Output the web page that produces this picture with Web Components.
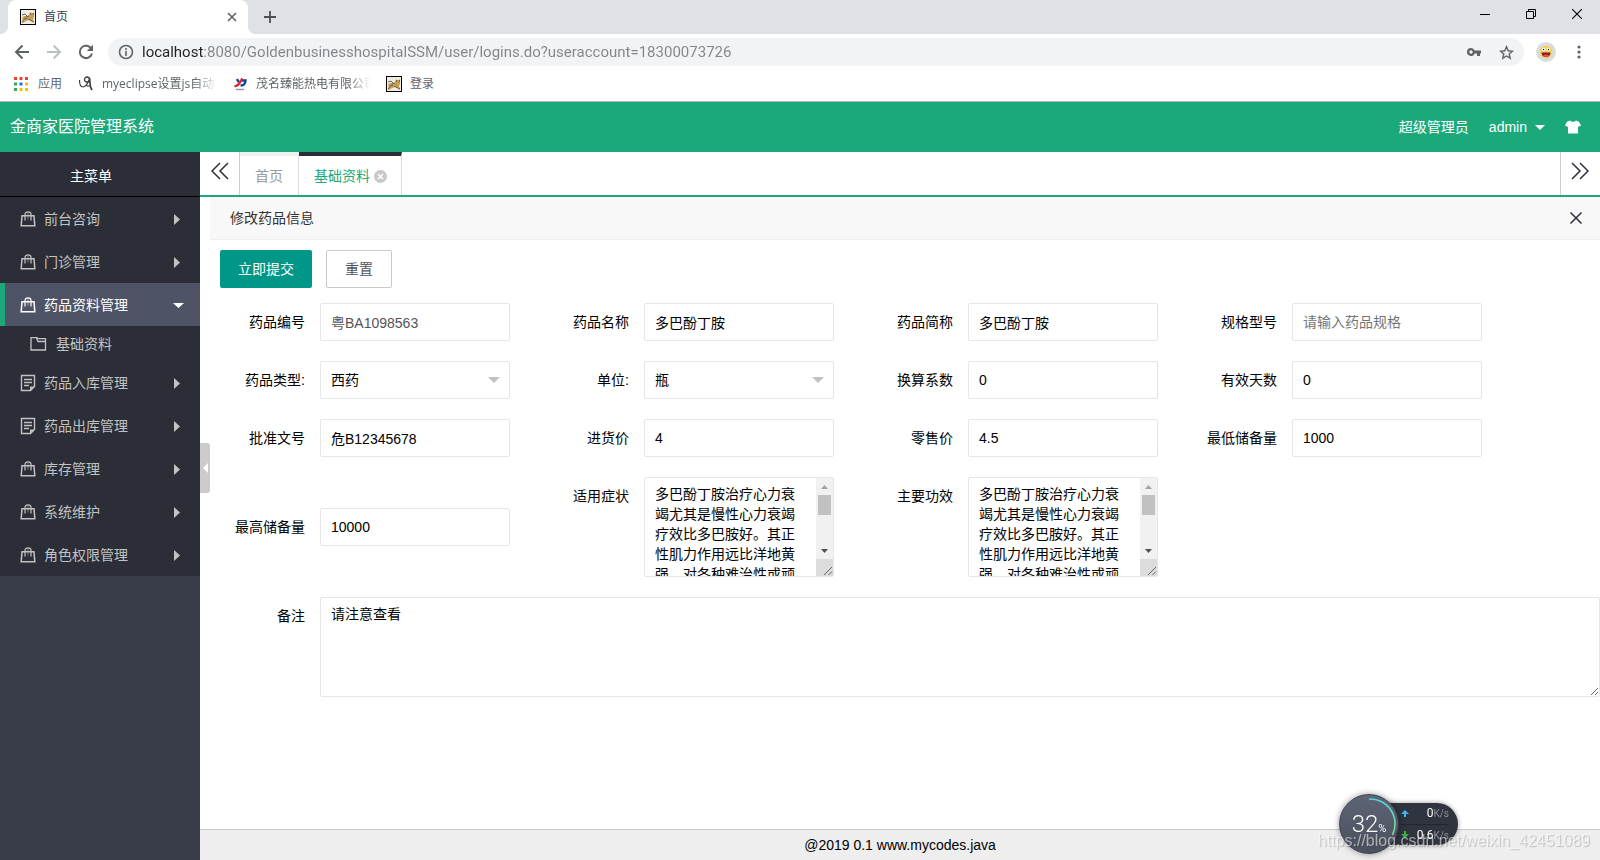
<!DOCTYPE html>
<html lang="zh-CN">
<head>
<meta charset="utf-8">
<title>首页</title>
<style>
  html, body { margin: 0; height: 100%; }
  body { font: 14px/20px "Liberation Sans", "Noto Sans CJK SC", sans-serif; color: #000; background: #fff; overflow: hidden; }
</style>
</head>
<body>
<desktop-shell>
  <tab-strip slot="browser"></tab-strip>
  <address-bar slot="browser"></address-bar>
  <bookmark-bar slot="browser"></bookmark-bar>
  <app-header slot="header"></app-header>
  <side-menu slot="side">
    <menu-item icon="bag">前台咨询</menu-item>
    <menu-item icon="bag">门诊管理</menu-item>
    <menu-item icon="bag" open>药品资料管理</menu-item>
    <menu-item icon="folder" sub>基础资料</menu-item>
    <menu-item icon="note">药品入库管理</menu-item>
    <menu-item icon="note">药品出库管理</menu-item>
    <menu-item icon="bag">库存管理</menu-item>
    <menu-item icon="bag">系统维护</menu-item>
    <menu-item icon="bag">角色权限管理</menu-item>
  </side-menu>
  <page-tabs slot="tabs"></page-tabs>
  <medicine-form slot="content"></medicine-form>
  <page-footer slot="footer">@2019 0.1 www.mycodes.java</page-footer>
</desktop-shell>
<speed-widget></speed-widget>
<water-mark>https://blog.csdn.net/weixin_42451089</water-mark>

<script>
const base = `
  :host, * { box-sizing: border-box; }
  svg { display: block; flex: none; }
  button { font: inherit; color: inherit; background: none; border: 0; padding: 0; margin: 0; }
  a { color: inherit; text-decoration: none; }
`;
function define(name, render) {
  customElements.define(name, class extends HTMLElement {
    constructor() {
      super();
      this.attachShadow({ mode: 'open' });
    }
    connectedCallback() {
      if (this.shadowRoot.firstChild) return;
      const t = document.createElement('template');
      const [css, html] = render(this);
      t.innerHTML = `<style>${base}${css}</style>${html}`;
      this.shadowRoot.append(t.content.cloneNode(true));
    }
  });
}

const icons = {
  cat: `<svg width="16" height="16" viewBox="0 0 16 16"><rect width="16" height="16" fill="#000"/><rect x="1" y="1" width="14" height="14" fill="#efece6"/><path d="M2 9l2-2 3 0 2-1 1-3 1 1h2l1-1v5l-1 2 1 4-3-2-2-1-3 1-3 2H2l1-3z" fill="#c99f4e"/><path d="M2 6l3-1 2 2M2 13l3-4 2 1M8 10l4 2 2 1M6 8l3-1" fill="none" stroke="#6b6354"/><path d="M10 5h1M13 5h1" stroke="#333"/></svg>`,
  bag: `<svg width="16" height="18" viewBox="0 0 16 18" fill="none" stroke="currentColor"><path d="M2 5.700h12l.8 10H1.200z" stroke-width="1.500"/><path d="M5 10.500V4.500c0-3.500 6-3.500 6 0v6" stroke-width="1.200"/><path d="M8 2.500v7" stroke-width=".8" opacity=".7"/></svg>`,
  note: `<svg width="16" height="18" viewBox="0 0 16 18" fill="none" stroke="currentColor"><path d="M1.500 1.500h13v11l-4 4h-9z" stroke-width="1.400"/><path d="M10 16.500v-4h4.500z" fill="currentColor" stroke="none"/><path d="M4 5.500h8M4 8.500h8M4 11.500h5" stroke-width="1.300"/></svg>`,
  folder: `<svg width="17" height="16" viewBox="0 0 17 16" fill="none" stroke="currentColor" stroke-width="1.300"><path d="M1 14V1.700h6l1 1h7.500V14z"/><path d="M6.500 2l1.500 3.500h7.500"/></svg>`,
};

define('desktop-shell', () => [`
  :host { display: flex; flex-direction: column; height: 100vh; }
  .body { display: flex; flex: 1; min-height: 0; }
  .side { width: 200px; flex: none; background: #393d49; }
  main { flex: 1; min-width: 0; display: flex; flex-direction: column; }
  .view { flex: 1; display: flex; min-height: 0; }
  .gutter { width: 10px; flex: none; padding-top: 246px; }
  .gutter button { display: grid; place-items: center; width: 10px; height: 50px; background: #ccc; border-radius: 0 3px 3px 0; }
  .panel { flex: 1; min-width: 0; }
`, `
  <slot name="browser"></slot>
  <slot name="header"></slot>
  <div class="body">
    <div class="side"><slot name="side"></slot></div>
    <main>
      <slot name="tabs"></slot>
      <div class="view">
        <div class="gutter"><button aria-label="收起菜单"><svg width="8" height="10" viewBox="0 0 8 10"><path d="M7 0v10L2 5z" fill="#fff"/></svg></button></div>
        <div class="panel"><slot name="content"></slot></div>
      </div>
      <slot name="footer"></slot>
    </main>
  </div>`]);

define('tab-strip', () => [`
  :host { display: flex; height: 34px; flex: none; background: #dee1e6; padding-left: 8px; font: 12px/16px "Open Sans", "Noto Sans CJK SC", sans-serif; color: #3c4043; }
  .tab { position: relative; display: flex; align-items: center; width: 240px; padding: 0 10px 0 12px; gap: 8px; background: #fff; border-radius: 8px 8px 0 0; }
  .tab::before, .tab::after { content: ""; position: absolute; bottom: 0; width: 8px; height: 8px; }
  .tab::before { left: -8px; background: radial-gradient(circle at 0 0, #dee1e6 8px, #fff 8px); }
  .tab::after { right: -8px; background: radial-gradient(circle at 100% 0, #dee1e6 8px, #fff 8px); }
  .name { flex: 1; }
  .new { width: 44px; display: grid; place-items: center; }
  .win { margin-left: auto; display: flex; height: 28px; }
  .win button { width: 46px; display: grid; place-items: center; }
`, `
  <div class="tab">${icons.cat}<span class="name">首页</span>
    <button aria-label="关闭标签"><svg width="12" height="12" viewBox="0 0 12 12"><path d="M2 2l8 8M10 2l-8 8" stroke="#5f6368" stroke-width="1.600"/></svg></button></div>
  <button class="new" aria-label="新标签"><svg width="14" height="14" viewBox="0 0 14 14"><path d="M7 1v12M1 7h12" stroke="#4d5156" stroke-width="1.800"/></svg></button>
  <div class="win">
    <button aria-label="最小化"><svg width="10" height="10"><path d="M0 5.500h10" stroke="#000"/></svg></button>
    <button aria-label="还原"><svg width="10" height="10" fill="none" stroke="#000"><path d="M.5 2.500h7v7h-7zM2.500 2.500v-2h7v7h-2"/></svg></button>
    <button aria-label="关闭"><svg width="10" height="10"><path d="M0 0l10 10M10 0L0 10" stroke="#000" stroke-width="1.100"/></svg></button>
  </div>`]);

define('address-bar', () => [`
  :host { display: flex; align-items: center; height: 36px; flex: none; background: #fff; padding: 0 6px 0 6px; color: #5f6368; }
  .nav { width: 32px; display: grid; place-items: center; }
  .box { flex: 1; display: flex; align-items: center; height: 28px; margin: 0 12px 0 6px; padding: 0 2px 0 10px; background: #f1f3f4; border-radius: 14px; }
  input { flex: 1; min-width: 0; height: 28px; border: 0; padding: 0; margin-left: 8px; outline: 0; font: 15px/28px Roboto, sans-serif; color: transparent;
    background: linear-gradient(90deg, #202124 62px, #80868b 62px); -webkit-background-clip: text; background-clip: text; }
  .box button { width: 32px; height: 28px; display: grid; place-items: center; }
  .more { width: 30px; display: grid; place-items: center; margin-left: 8px; }
`, `
  <button class="nav" aria-label="后退"><svg width="16" height="16" fill="none" stroke="#5f6368" stroke-width="2"><path d="M15 8H2M8.500 1.500L2 8l6.500 6.500"/></svg></button>
  <button class="nav" aria-label="前进"><svg width="16" height="16" fill="none" stroke="#bdc1c6" stroke-width="2"><path d="M1 8h13M7.500 1.500L14 8l-6.500 6.500"/></svg></button>
  <button class="nav" aria-label="刷新"><svg width="16" height="16" fill="none" stroke="#5f6368" stroke-width="2"><path d="M13.500 5A6.200 6.200 0 1 0 14 9.500"/><path d="M15 .8V7H8.800z" fill="#5f6368" stroke="none"/></svg></button>
  <div class="box">
    <svg width="16" height="16" fill="none" stroke="#5f6368" stroke-width="1.600"><circle cx="8" cy="8" r="6.500"/><path d="M8 7v5M8 4v2"/></svg>
    <input aria-label="地址" value="localhost:8080/GoldenbusinesshospitalSSM/user/logins.do?useraccount=18300073726">
    <button aria-label="密码"><svg width="14" height="8" viewBox="0 0 14 8"><path fill-rule="evenodd" fill="#5f6368" d="M4 0a4 4 0 0 1 3.700 2.500H14v3h-1V8h-3V5.500H7.700A4 4 0 1 1 4 0zm0 2.300a1.700 1.700 0 1 0 0 3.400 1.700 1.700 0 0 0 0-3.400z"/></svg></button>
    <button aria-label="收藏"><svg width="15" height="15" viewBox="0 0 15 15"><path d="M7.500 1.800l1.700 4 4.300.4-3.300 2.800 1 4.200-3.700-2.200-3.700 2.200 1-4.200L1.500 6.200l4.300-.4z" fill="none" stroke="#5f6368" stroke-width="1.400"/></svg></button>
  </div>
  <svg width="20" height="20"><circle cx="10" cy="10" r="10" fill="#dadce0"/><circle cx="10" cy="10" r="6.500" fill="#f6cf5a"/><circle cx="7.500" cy="7.500" r="1.700" fill="#fff"/><circle cx="12.500" cy="7.500" r="1.700" fill="#fff"/><circle cx="7.500" cy="7.500" r=".7"/><circle cx="12.500" cy="7.500" r=".7"/><path d="M5.500 10.500h9c0 6-9 6-9 0z" fill="#7d1d1d"/><path d="M7 13.500c2-1.300 4-1.300 6 0-1.500 1.900-4.500 1.900-6 0z" fill="#f0447c"/></svg>
  <button class="more" aria-label="菜单"><svg width="4" height="14" fill="#5f6368"><circle cx="2" cy="2" r="1.600"/><circle cx="2" cy="7" r="1.600"/><circle cx="2" cy="12" r="1.600"/></svg></button>`]);

define('bookmark-bar', () => [`
  :host { display: flex; align-items: center; height: 32px; flex: none; background: #fff; border-bottom: 1px solid #b6b4b6; padding: 0 14px 3px; font: 12px/18px "Open Sans", "Noto Sans CJK SC", sans-serif; color: #5f6368; }
  a { display: flex; align-items: center; gap: 8px; height: 20px; }
  .apps { width: 64px; gap: 10px; }
  .js { width: 154px; }
  .power { width: 154px; }
  .fade { width: 122px; overflow: hidden; white-space: nowrap; -webkit-mask-image: linear-gradient(90deg, #000 76%, transparent 94%); mask-image: linear-gradient(90deg, #000 76%, transparent 94%); }
`, `
  <a class="apps" href="#"><svg width="14" height="14"><path d="M0 0h3v3H0zM5.500 0h3v3h-3zM11 0h3v3h-3z" fill="#ea4335"/><path d="M0 5.500h3v3H0zM0 11h3v3H0z" fill="#34a853"/><path d="M5.500 5.500h3v3h-3z" fill="#1a73e8"/><path d="M11 5.500h3v3h-3zM5.500 11h3v3h-3zM11 11h3v3h-3z" fill="#fbbc04"/></svg>应用</a>
  <a class="js" href="#"><svg width="16" height="16" fill="none" stroke="#3f3f3f"><path d="M1.500 4c0 4 1 7 3.500 7 2.500-.5 5-4 6-7" stroke-width="1.200"/><circle cx="9" cy="3.500" r="2.500" stroke-width="1.300"/><path d="M11.500 2l1 9 1.500 3" stroke-width="1.700"/><path d="M8 9c1 1.500 3 1 4 .5" stroke-width="1.100"/></svg><span class="fade">myeclipse设置js自动</span></a>
  <a class="power" href="#"><svg width="16" height="16" viewBox="0 0 16 16" fill="none" stroke-width="2.400"><path d="M5 3l1.500 3" stroke="#17459c"/><path d="M8.500 9.500c4 0 4.500-1.500 5-5H10" stroke="#17459c"/><path d="M10.500 2.500L6 9l-3.500 1.500" stroke="#dd2633"/><path d="M4 13.500h8" stroke="#8e98ad" stroke-width="1.500"/></svg><span class="fade">茂名臻能热电有限公司</span></a>
  <a href="#">${icons.cat}登录</a>`]);

define('app-header', () => [`
  :host { display: flex; align-items: center; height: 50px; flex: none; background: #1ba97b; color: #fff; padding: 0 19px 0 10px; gap: 20px; }
  h1 { font-size: 16px; line-height: 20px; font-weight: 400; margin: 0 auto 0 0; }
  .user { display: flex; align-items: center; gap: 8px; }
`, `
  <h1>金商家医院管理系统</h1>
  <span>超级管理员</span>
  <a class="user" href="#">admin<svg width="10" height="5"><path d="M0 0h10L5 5z" fill="#fff"/></svg></a>
  <button aria-label="换肤"><svg width="16" height="14" viewBox="0 0 16 14"><path d="M5 .5c1.500 1.700 4.500 1.700 6 0l3 1.200L16 5.500 13 7v6.500H3V7L0 5.500l2-3.800z" fill="#fff"/></svg></button>`]);

define('side-menu', () => [`
  :host { display: block; background: #2b2e37; }
  h2 { margin: 0; height: 45px; padding-right: 18px; border-bottom: 1px solid #000; color: #fff; font-size: 14px; line-height: 48px; font-weight: 400; text-align: center; }
`, `<h2>主菜单</h2><nav><slot></slot></nav>`]);

define('menu-item', el => [`
  :host { display: block; color: #c2c2c2; }
  a { display: flex; align-items: center; height: 43px; padding: 0 15px 0 15px; border-left: 5px solid transparent; }
  :host([sub]) a { height: 35px; padding-left: 25px; }
  :host([open]) { color: #fff; }
  :host([open]) a { background: #4e5465; border-color: #1ba97b; }
  .ic { width: 24px; }
  :host([sub]) .ic { width: 26px; }
  .arrow { margin-left: auto; width: 12px; }
`, `<a href="#"><span class="ic">${icons[el.getAttribute('icon')]}</span><slot></slot>
  ${el.hasAttribute('sub') ? '' : `<svg class="arrow" height="12" fill="currentColor">${el.hasAttribute('open') ? '<path d="M0 4h11L5.500 9z"/>' : '<path d="M1 1v11l6-5.500z"/>'}</svg>`}</a>`]);

define('page-tabs', () => [`
  :host { display: flex; height: 45px; flex: none; border-bottom: 2px solid #1ba97b; background: #fff; color: #999; }
  .nav { width: 40px; display: grid; place-items: center; padding-bottom: 5px; color: #2b2e37; }
  .prev { border-right: 1px solid #ccc; }
  .next { margin-left: auto; border-left: 1px solid #ccc; padding-right: 1px; }
  a { display: flex; align-items: center; gap: 4px; padding: 1px 14px 0 15px; border-top: 4px solid #f0f0f0; border-right: 1px solid #ddd; }
  a:not(.on) { padding-right: 15px; }
  a.on { color: #1ba97b; border-top-color: #2b2e37; }
`, `
  <button class="nav prev" aria-label="向左"><svg width="18" height="18" fill="none" stroke="currentColor" stroke-width="1.500"><path d="M9 1L1 9l8 8M17 1L9 9l8 8"/></svg></button>
  <a href="#">首页</a>
  <a href="#" class="on">基础资料<svg width="13" height="13"><circle cx="6.500" cy="6.500" r="6.500" fill="#c8c8c8"/><path d="M4 4l5 5M9 4L4 9" stroke="#fff" stroke-width="1.600"/></svg></a>
  <button class="nav next" aria-label="向右"><svg width="18" height="18" fill="none" stroke="currentColor" stroke-width="1.500"><path d="M1 1l8 8-8 8M9 1l8 8-8 8"/></svg></button>`]);

const arrowImg = (d, c, w, h) => `url("data:image/svg+xml,%3Csvg xmlns='http://www.w3.org/2000/svg' width='${w}' height='${h}'%3E%3Cpath d='${d}' fill='${encodeURIComponent(c)}'/%3E%3C/svg%3E")`;

define('form-field', el => {
  const g = n => el.getAttribute(n) || '';
  const type = g('type');
  let control = `<input id="c" value="${g('value')}" placeholder="${g('placeholder')}" ${el.hasAttribute('disabled') ? 'disabled' : ''}>`;
  if (type === 'select') control = `<select id="c"><option>${g('value')}</option></select>`;
  if (type === 'area') control = `<textarea id="c">${g('value')}</textarea>`;
  if (el.hasAttribute('scroll')) control = `<div class="scroller">${control}<div class="bar" aria-hidden="true">
    <span class="cap"><svg width="7" height="4"><path d="M0 4h7L3.500 0z" fill="#a3a3a3"/></svg></span>
    <span class="track"><span class="thumb"></span></span>
    <span class="cap"><svg width="7" height="4"><path d="M0 0h7L3.500 4z" fill="#505050"/></svg></span>
    <span class="grip"><svg width="10" height="10" fill="none" stroke="#666"><path d="M1 9l8-8M5.500 9L9 5.500"/></svg></span></div></div>`;
  return [`
  :host { display: flex; min-width: 0; align-items: center; }
  :host([type=area]) { align-items: flex-start; }
  label { width: 110px; flex: none; padding-right: 15px; line-height: 38px; text-align: right; }
  input, select, textarea, .scroller { flex: 1; min-width: 0; height: 38px; margin: 0; padding: 0 10px; border: 1px solid #e6e6e6; border-radius: 2px; background: #fff; color: #000; font: inherit; outline: 0; }
  input:disabled { color: #545454; }
  ::placeholder { color: #757575; }
  select { appearance: none; background: ${arrowImg('M0 0h12L6 6z', '#c2c2c2', 12, 6)} no-repeat right 9px center; }
  textarea { height: 100px; padding: 6px 10px; line-height: 20px; display: block; }
  .scroller { display: flex; height: 100px; padding: 0; }
  .scroller textarea { height: 98px; border: 0; resize: none; overflow-y: auto; scrollbar-width: none; }
  .bar { display: flex; flex-direction: column; width: 17px; flex: none; background: #f1f1f1; }
  .cap { display: grid; place-items: center; height: 17px; }
  .track { flex: 1; padding: 0 2px; }
  .thumb { display: block; height: 20px; background: #c1c1c1; }
  .grip { display: grid; place-items: end; height: 17px; background: #dcdcdc; }
`, `<label for="c">${g('label')}</label>${control}`];
});

const effect = '多巴酚丁胺治疗心力衰竭尤其是慢性心力衰竭疗效比多巴胺好。其正性肌力作用远比洋地黄强，对各种难治性或顽固性心力衰竭有效。适用于器质性心脏病心肌收缩力下降引起的心力衰竭，包括心脏直视手术后所致的低排血量综合征，作为短期支持治疗。';
define('medicine-form', () => [`
  :host { display: block; }
  header { display: flex; align-items: center; justify-content: space-between; height: 43px; padding: 0 18px 0 20px; background: #f8f8f8; border-bottom: 1px solid #eee; color: #333; }
  form { margin: 0; }
  .actions { display: flex; gap: 14px; padding: 10px 10px 15px; }
  .actions button { height: 38px; padding: 0 18px; border-radius: 2px; background: #009688; color: #fff; }
  .actions .reset { border: 1px solid #c9c9c9; background: #fff; color: #555; }
  .grid { display: grid; grid-template-columns: repeat(4, 300px); gap: 20px 24px; margin-bottom: 20px; }
`, `
  <header>修改药品信息<button aria-label="关闭"><svg width="12" height="12"><path d="M.5.5l11 11M11.500.5l-11 11" stroke="#2e2d3c" stroke-width="1.500"/></svg></button></header>
  <form>
    <div class="actions"><button type="button">立即提交</button><button type="reset" class="reset">重置</button></div>
    <div class="grid">
      <form-field label="药品编号" value="粤BA1098563" disabled></form-field>
      <form-field label="药品名称" value="多巴酚丁胺"></form-field>
      <form-field label="药品简称" value="多巴酚丁胺"></form-field>
      <form-field label="规格型号" placeholder="请输入药品规格"></form-field>
      <form-field label="药品类型:" type="select" value="西药"></form-field>
      <form-field label="单位:" type="select" value="瓶"></form-field>
      <form-field label="换算系数" value="0"></form-field>
      <form-field label="有效天数" value="0"></form-field>
      <form-field label="批准文号" value="危B12345678"></form-field>
      <form-field label="进货价" value="4"></form-field>
      <form-field label="零售价" value="4.5"></form-field>
      <form-field label="最低储备量" value="1000"></form-field>
      <form-field label="最高储备量" value="10000"></form-field>
      <form-field label="适用症状" type="area" scroll value="${effect}"></form-field>
      <form-field label="主要功效" type="area" scroll value="${effect}"></form-field>
    </div>
    <form-field label="备注" type="area" value="请注意查看"></form-field>
  </form>`]);

define('page-footer', () => [`
  :host { display: block; flex: none; height: 31px; border-top: 1px solid #c9c9c9; background: #eee; text-align: center; line-height: 31px; }
`, `<slot></slot>`]);

define('speed-widget', () => [`
  :host { position: fixed; right: 142px; bottom: 6px; display: flex; align-items: center; color: #fff; font-family: Roboto, sans-serif; }
  .dial { position: relative; z-index: 1; display: flex; align-items: baseline; justify-content: center; width: 60px; height: 60px; padding-top: 9px; border-radius: 50%; background: linear-gradient(#5d6474, #4b505e); border: 1px solid #3b3f4b; box-shadow: 0 0 6px rgba(0,0,0,.4); font-weight: 300; font-size: 24px; line-height: 40px; }
  .dial small { font-size: 11px; font-weight: 400; }
  .dial svg { position: absolute; inset: 0; }
  .pill { width: 80px; height: 42px; margin-left: -21px; padding: 0 9px 0 23px; border-radius: 0 21px 21px 0; background: #30343e; box-shadow: 0 0 5px rgba(0,0,0,.4); font-size: 12px; line-height: 21px; }
  .row { display: flex; align-items: center; height: 21px; }
  .row + .row { border-top: 1px solid #22252d; }
  .row b { margin-left: auto; font-weight: 400; }
  .row i { font-style: normal; font-size: 10px; color: #8d919b; }
`, `
  <div class="dial">32<small>%</small><svg width="58" height="58" fill="none"><defs><linearGradient id="g" x2="0" y2="1"><stop stop-color="#4fd3e8"/><stop offset="1" stop-color="#7ee08a"/></linearGradient></defs><path d="M29 4a25 25 0 0 1 23.500 36" stroke="url(#g)" stroke-width="1.600"/></svg></div>
  <div class="pill">
    <div class="row"><svg width="8" height="8"><path d="M4 0l4 4H5v3H3V4H0z" fill="#41b6f5"/></svg><b>0</b><i>K/s</i></div>
    <div class="row"><svg width="8" height="8"><path d="M4 7l4-4H5V0H3v3H0z" fill="#35b53c"/></svg><b>0.6</b><i>K/s</i></div>
  </div>`]);

define('water-mark', () => [`
  :host { position: fixed; right: 10px; bottom: 9px; z-index: 2; font-size: 16px; line-height: 20px; color: rgba(255,255,255,.55); text-shadow: 1px 1px 1px rgba(0,0,0,.2); pointer-events: none; }
`, `<slot></slot>`]);
</script>
</body>
</html>
